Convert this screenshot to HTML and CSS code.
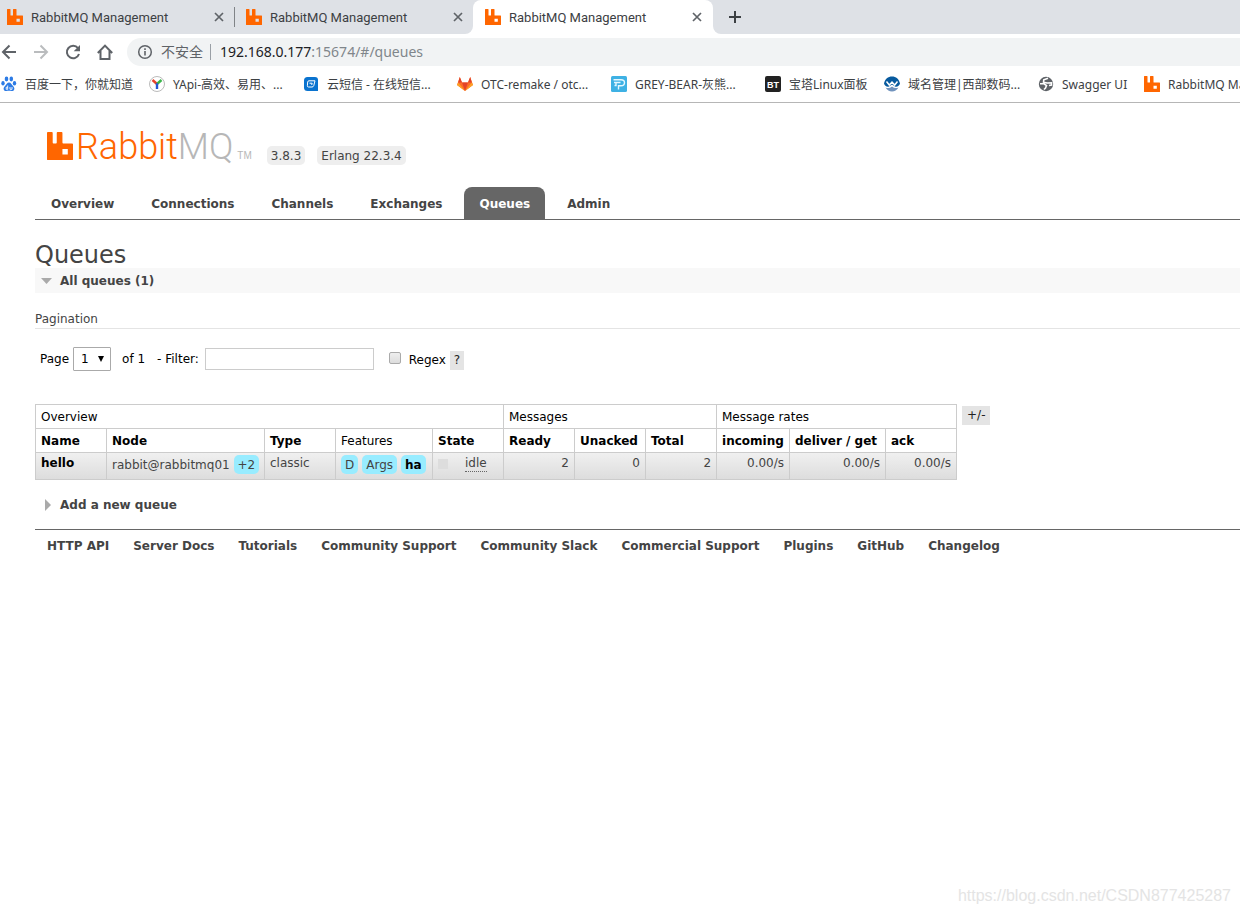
FILE: index.html
```html
<!DOCTYPE html>
<html lang="en">
<head>
<meta charset="utf-8">
<title>RabbitMQ Management</title>
<link rel="stylesheet" href="styles.css">
</head>
<body>
<svg class="defs" aria-hidden="true">
  <symbol id="rabbit" viewBox="0 0 16 16" preserveAspectRatio="none"><path fill="#ff6600" fill-rule="evenodd" d="M.5 0H3Q3.500 0 3.500 .5V6Q3.500 6.500 4 6.500H5.500Q6 6.500 6 6V.5Q6 0 6.500 0H9Q9.500 0 9.500 .5V6Q9.500 6.500 10 6.500H15.500Q16 6.500 16 7V15.500Q16 16 15.500 16H.5Q0 16 0 15.500V.5Q0 0 .5 0ZM9.500 9.700V12.800H12.800V9.700Z"/></symbol>
  <symbol id="close" viewBox="0 0 10 10"><path d="M1 1L9 9M9 1L1 9" stroke="#5f6368" stroke-width="1.700" fill="none"/></symbol>
</svg>

<header class="browser">
  <div class="tabs">
    <div class="tab"><svg class="ico"><use href="#rabbit"/></svg><span class="tab-title">RabbitMQ Management</span><button class="icon-btn" aria-label="Close tab"><svg class="x"><use href="#close"/></svg></button></div>
    <div class="tab divided"><svg class="ico"><use href="#rabbit"/></svg><span class="tab-title">RabbitMQ Management</span><button class="icon-btn" aria-label="Close tab"><svg class="x"><use href="#close"/></svg></button></div>
    <div class="tab current"><svg class="ico"><use href="#rabbit"/></svg><span class="tab-title">RabbitMQ Management</span><button class="icon-btn" aria-label="Close tab"><svg class="x"><use href="#close"/></svg></button></div>
    <div class="tab-rest"><button class="icon-btn" aria-label="New tab"><svg width="12" height="12" viewBox="0 0 12 12"><path d="M6 0V12M0 6H12" stroke="#3c4043" stroke-width="2"/></svg></button></div>
  </div>
  <div class="toolbar">
    <button class="icon-btn" aria-label="Back"><svg width="16" height="16" viewBox="0 0 16 16" fill="none" stroke="#5f6368" stroke-width="2"><path d="M15 8H2M8.500 1.500L2 8L8.500 14.500"/></svg></button>
    <button class="icon-btn" aria-label="Forward"><svg width="16" height="16" viewBox="0 0 16 16" fill="none" stroke="#babcbe" stroke-width="2"><path d="M1 8H14M7.500 1.500L14 8L7.500 14.500"/></svg></button>
    <button class="icon-btn" aria-label="Reload"><svg width="16" height="16" viewBox="0 0 16 16"><path d="M13 4.200A6.200 6.200 0 1 0 14 10" fill="none" stroke="#5f6368" stroke-width="2"/><path d="M15 1V7.300H8.700Z" fill="#5f6368"/></svg></button>
    <button class="icon-btn" aria-label="Home"><svg width="16" height="16" viewBox="0 0 16 16" fill="none" stroke="#5f6368" stroke-width="2"><path d="M.8 9L8 1.600L15.200 9M3.500 7V15H12.500V7"/></svg></button>
    <div class="omnibox">
      <svg width="16" height="16" viewBox="0 0 16 16"><circle cx="8" cy="8" r="6.300" fill="none" stroke="#5f6368" stroke-width="1.500"/><path d="M8 7V11.500M8 4.300V5.900" stroke="#5f6368" stroke-width="1.600"/></svg>
      <span class="insecure">不安全</span>
      <span class="url">192.168.0.177<span class="path">:15674/#/queues</span></span>
    </div>
  </div>
  <nav class="bookmarks" aria-label="Bookmarks">
    <a href="#" class="bm first"><svg class="ico" viewBox="0 0 16 16" fill="#2c7be5"><ellipse cx="2" cy="7.300" rx="1.700" ry="2.200"/><ellipse cx="5.500" cy="3" rx="1.800" ry="2.400"/><ellipse cx="10.300" cy="3" rx="1.800" ry="2.400"/><ellipse cx="13.500" cy="7.300" rx="1.700" ry="2.200"/><path d="M8 6.500C10 6.500 10.500 8.500 12 10C15 13 12.500 15.500 10.500 15C9 14.600 7 14.600 5.500 15C3.500 15.500 1 13 4 10C5.500 8.500 6 6.500 8 6.500Z"/><path d="M6.700 9.500V13.300H5.200V11.300H6.700M9 11V13.300H11V11" fill="none" stroke="#fff" stroke-width=".9"/></svg><span>百度一下，你就知道</span></a>
    <a href="#" class="bm"><svg class="ico" viewBox="0 0 16 16"><circle cx="8" cy="8" r="7.500" fill="#fff" stroke="#bbb"/><g fill="none" stroke-width="2.400"><path d="M3.500 4L8 8" stroke="#e8432c"/><path d="M12.500 4L8 8" stroke="#39b54a"/><path d="M8 7.300V13" stroke="#2456d6"/></g></svg><span>YApi-高效、易用、...</span></a>
    <a href="#" class="bm"><svg class="ico" viewBox="0 0 16 16"><path d="M4.500 1H12Q15 1 15 4V15H4.500Q1 15 1 11.500V4.500Q1 1 4.500 1Z" fill="#0a73cf"/><path d="M6 4.800H12L10.800 9.500Q10.300 11 9 11H5.500Q4.200 11 4.400 9.500L4.700 6Q4.800 4.800 6 4.800ZM6.500 7.200H9.200L8.700 9" fill="none" stroke="#fff"/></svg><span>云短信 - 在线短信...</span></a>
    <a href="#" class="bm"><svg class="ico" viewBox="0 0 16 16"><path d="M8 15L0 9L2.800 1L5 6.500H11L13.200 1L16 9Z" fill="#fc6d26"/><path d="M8 15L5 6.500H11Z" fill="#e24329"/><path d="M0 9L1.200 6.500L8 15ZM16 9L14.800 6.500L8 15Z" fill="#fca326"/><path d="M2.800 1L5 6.500H1.200ZM13.200 1L11 6.500H14.800Z" fill="#e24329"/></svg><span>OTC-remake / otc...</span></a>
    <a href="#" class="bm"><svg class="ico" viewBox="0 0 16 16"><rect width="16" height="16" rx="1.500" fill="#3eb1e4"/><path d="M2.500 3.700H10Q13.500 3.700 13.500 6.700Q13.500 9.700 10 9.700H7.500V13.500M3 6.500H9.500M5 6.500V9.500H3.500" fill="none" stroke="#e4f7ff" stroke-width="1.400"/></svg><span>GREY-BEAR-灰熊...</span></a>
    <a href="#" class="bm short"><svg class="ico" viewBox="0 0 16 16"><rect width="16" height="16" rx="2" fill="#222"/><text x="8" y="12" text-anchor="middle" class="bt">BT</text></svg><span>宝塔Linux面板</span></a>
    <a href="#" class="bm"><svg class="ico" viewBox="0 0 16 16"><path d="M0 7.500C1 3 4 .5 8 .5S15 3 16 7.500C15.500 9.500 13 11.500 11 10.500L8 8.500L5 10.500C3 11.500 .5 9.500 0 7.500Z" fill="#075a9e"/><path d="M2.500 5.500L5.300 9L8 6L10.700 9L13.500 5.500" fill="none" stroke="#fff" stroke-width="1.500"/><path d="M1.500 11.500Q5 13 8 10.500Q11 13 14.500 11.500Q12 15.500 8 15.500T1.500 11.500Z" fill="#7193bd"/></svg><span>域名管理|西部数码...</span></a>
    <a href="#" class="bm swagger"><svg class="ico" viewBox="0 0 16 16"><circle cx="8" cy="8" r="7.200" fill="#5f6368"/><path d="M10 2.200L5.800 3.800L5.500 6.200L9 7L13.500 6.800V9L11 9.500M2 7.800H6L8.500 9.500L7.500 12L6 13.500" fill="none" stroke="#fff" stroke-width="1.600"/></svg><span>Swagger UI</span></a>
    <a href="#" class="bm"><svg class="ico"><use href="#rabbit"/></svg><span>RabbitMQ Management</span></a>
  </nav>
</header>

<div class="page">
  <div class="brand">
    <a href="#" class="logo" aria-label="RabbitMQ"><svg class="logo-mark"><use href="#rabbit"/></svg><span class="logo-text">Rabbit<span class="mq">MQ</span></span><span class="tm">TM</span></a>
    <span class="version">3.8.3</span>
    <span class="version">Erlang 22.3.4</span>
  </div>
  <nav class="menu">
    <a href="#">Overview</a><a href="#">Connections</a><a href="#">Channels</a><a href="#">Exchanges</a><a href="#" class="selected">Queues</a><a href="#">Admin</a>
  </nav>
  <main>
    <h1>Queues</h1>
    <h2 class="section open"><svg width="11" height="6"><path d="M0 0H11L5.500 6Z" fill="#aaa"/></svg>All queues (1)</h2>
    <h3>Pagination</h3>
    <form class="pager">
      <label for="page">Page</label>
      <select id="page"><option>1</option></select>
      <span class="of">of 1</span>
      <label for="filter">- Filter:</label>
      <input type="text" id="filter">
      <input type="checkbox" id="regex">
      <label for="regex" class="regex">Regex</label>
      <button type="button" class="help">?</button>
    </form>
    <div class="list">
      <table>
        <colgroup><col class="c71"><col class="c158"><col class="c71"><col class="c97"><col class="c71"><col class="c71"><col class="c71"><col class="c71"><col class="c73"><col class="c96"><col class="c71"></colgroup>
        <thead>
          <tr><th colspan="5" class="plain">Overview</th><th colspan="3" class="plain">Messages</th><th colspan="3" class="plain">Message rates</th></tr>
          <tr><th>Name</th><th>Node</th><th>Type</th><th class="plain">Features</th><th>State</th><th>Ready</th><th>Unacked</th><th>Total</th><th>incoming</th><th>deliver / get</th><th>ack</th></tr>
        </thead>
        <tbody>
          <tr><td><a href="#" class="strong">hello</a></td><td>rabbit@rabbitmq01 <span class="tag">+2</span></td><td>classic</td><td><div class="tags"><span class="tag">D</span><span class="tag">Args</span><a href="#" class="tag strong">ha</a></div></td><td><div class="state"><i class="dot"></i><span class="idle">idle</span></div></td><td class="r">2</td><td class="r">0</td><td class="r">2</td><td class="r">0.00/s</td><td class="r">0.00/s</td><td class="r">0.00/s</td></tr>
        </tbody>
      </table>
      <button class="help">+/-</button>
    </div>
    <h2 class="section"><svg width="11" height="12"><path d="M4 0L10 6L4 12Z" fill="#aaa"/></svg>Add a new queue</h2>
  </main>
  <footer>
    <a href="#">HTTP API</a><a href="#">Server Docs</a><a href="#">Tutorials</a><a href="#">Community Support</a><a href="#">Community Slack</a><a href="#">Commercial Support</a><a href="#">Plugins</a><a href="#">GitHub</a><a href="#">Changelog</a>
  </footer>
</div>
<div class="watermark">https://blog.csdn.net/CSDN877425287</div>
</body>
</html>
```
FILE: styles.css
```css
* { box-sizing: border-box; }
body {
  margin: 0;
  min-height: 100vh;
  display: flex;
  flex-direction: column;
  overflow-x: hidden;
  background: #fff;
  color: #444;
  font: 12px/16px "DejaVu Sans", sans-serif;
}
a { color: inherit; text-decoration: none; }
button { font: inherit; border: 0; padding: 0; background: none; color: inherit; }
.defs { display: none; }
.ico { width: 16px; height: 16px; flex: none; }

/* Browser frame */
.browser {
  font-family: "Noto Sans", "Noto Sans CJK SC", sans-serif;
  color: #3c4043;
  border-bottom: 1px solid #b6b6b6;
}
.tabs { display: flex; height: 34px; background: linear-gradient(#dee1e6 50%, #fff 50%); }
.tab {
  display: flex;
  align-items: center;
  gap: 8px;
  width: 239px;
  padding: 0 10px 0 12px;
  background: #dee1e6;
  font: 13px/16px Roboto, sans-serif;
}
.tab:first-child { width: 234px; padding-left: 7px; }
.tab-title { flex: 1; padding-top: 1px; white-space: nowrap; }
.divided { padding-left: 0; border-radius: 0 0 8px 0; }
.divided::before { content: ""; width: 1px; height: 20px; margin-right: 3px; background: #808387; }
.current { width: 240px; padding-right: 11px; border-radius: 8px 8px 0 0; background: #fff; }
.tab-rest { flex: 1; display: flex; align-items: center; padding-left: 16px; background: #dee1e6; border-bottom-left-radius: 8px; }
.icon-btn { display: flex; align-items: center; justify-content: center; }
.x { width: 10px; height: 10px; }
.toolbar { display: flex; align-items: center; gap: 16px; height: 36px; padding-left: 1px; }
.omnibox {
  flex: 1;
  display: flex;
  align-items: center;
  height: 28px;
  margin-left: -2px;
  padding-left: 10px;
  border-radius: 14px 0 0 14px;
  background: #f1f3f4;
  font-size: 14px;
}
.insecure { margin-left: 8px; padding-right: 7px; border-right: 1px solid #9aa0a6; line-height: 16px; color: #5f6368; }
.url { margin-left: 9px; color: #202124; }
.path { color: #80868b; }
.bookmarks { display: flex; align-items: center; height: 32px; padding: 0 0 4px 1px; overflow: hidden; }
.bm { display: flex; flex: none; align-items: center; gap: 8px; width: 154px; white-space: nowrap; }
.bm span { padding-top: 1px; }
.bm.first { width: 148px; }
.bm.short { width: 119px; }
.bm.swagger { width: 106px; }
.bt { font: bold 9px "Liberation Sans", sans-serif; fill: #fff; }

/* Management page */
.page { padding: 26px 0 0 35px; }
.brand { display: flex; align-items: flex-end; gap: 12px; height: 36px; padding-left: 12px; }
.logo { display: flex; align-items: flex-end; margin-right: 3px; padding-bottom: 5px; }
.logo-mark { width: 26px; height: 28px; }
.logo-text { margin-left: 3px; font: 300 36px/26px Roboto, sans-serif; color: #ff6600; }
.mq { color: #b7b7b7; }
.tm { margin-left: 4px; font: 10px/8px "Liberation Sans", sans-serif; color: #b7b7b7; }
.version { padding: 2px 4px 1px; border-radius: 5px; background: #eee; }
.menu { display: flex; gap: 7px; margin-top: 22px; padding-left: 1px; border-bottom: 1px solid #666; font-weight: bold; }
.menu a { padding: 9px 15px 7px; border-radius: 8px 8px 0 0; }
.menu a.selected { background: #666; color: #fff; }
h1 { margin: 21px 0 0; font-size: 24px; line-height: 28px; font-weight: normal; }
.section { display: flex; align-items: center; gap: 8px; margin: 0; padding: 5px 6px 4px; font-size: 12px; line-height: 16px; }
.open { margin-top: -1px; background: #f8f8f8; }
h3 { margin: 18px 0 0; padding-bottom: 1px; border-bottom: 1px solid #e4e4e4; font-size: 12px; font-weight: normal; }
.pager { display: flex; align-items: center; margin-top: 18px; padding-left: 5px; color: #000; }
.pager select {
  appearance: none;
  width: 38px;
  height: 24px;
  margin: 0 11px 0 4px;
  padding: 0 7px;
  border: 1px solid #aaa;
  border-radius: 1px;
  background: #fff url("data:image/svg+xml,%3Csvg xmlns='http://www.w3.org/2000/svg' width='6' height='6'%3E%3Cpath d='M0 0H6L3 6Z'/%3E%3C/svg%3E") no-repeat right 6px center;
  font: inherit;
}
.of { margin-right: 12px; }
.pager input[type=text] { width: 169px; height: 22px; margin: 0 15px 0 6px; padding: 2px; border: 1px solid #ccc; font: inherit; }
.pager input[type=checkbox] {
  appearance: none;
  width: 12px;
  height: 12px;
  margin: 0 8px 2px 0;
  border: 1px solid #aaa;
  border-radius: 2px;
  background: linear-gradient(#eee, #ddd);
}
.regex { margin-right: 4px; padding-top: 2px; }
.help { padding: 1px 5px 2px; background: #e4e4e4; color: #222; }
.pager .help { padding: 1px 4px 2px; margin-top: 2px; }
.list { display: flex; align-items: flex-start; gap: 5px; margin: 33px 0 12px; }
.list .help { margin-top: 2px; }
table { table-layout: fixed; width: 922px; border-collapse: collapse; }
.c71 { width: 71px; }
.c73 { width: 73px; }
.c96 { width: 96px; }
.c97 { width: 97px; }
.c158 { width: 158px; }
th, td { padding: 2px 5px; border: 1px solid #ccc; text-align: left; vertical-align: top; white-space: nowrap; }
th { height: 24px; padding: 4px 5px 3px; color: #000; }
.plain { font-weight: normal; }
td { height: 27px; }
tbody tr { background: linear-gradient(#f0f0f0, #dcdcdc); }
.r { text-align: right; }
.strong { color: #000; font-weight: bold; }
.tag { display: inline-block; padding: 2px 4px 1px; border-radius: 5px; background: #98ecff; }
.tags { display: flex; gap: 4px; }
.state { display: flex; align-items: center; }
.dot { width: 10px; height: 10px; margin-right: 17px; background: #ddd; }
.idle { border-bottom: 1px dotted #666; }
footer { display: flex; gap: 24px; margin-top: 12px; padding: 8px 12px; border-top: 1px solid #666; font-weight: bold; }
.watermark { margin: auto 9px 8px auto; font: 16px/20px "Liberation Sans", sans-serif; color: #e4e4e4; }
```
